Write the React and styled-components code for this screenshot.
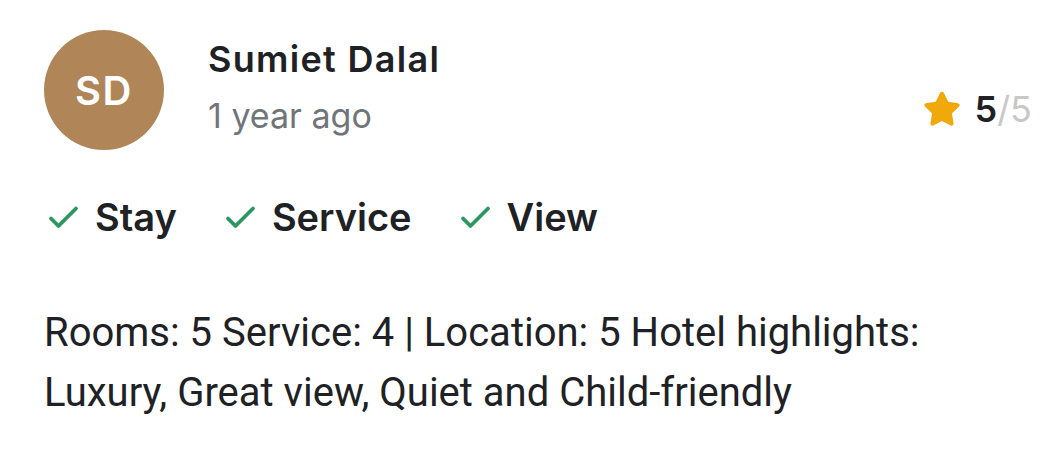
import React from "react";
import styled, { createGlobalStyle } from "styled-components";

const GlobalStyle = createGlobalStyle`
  *, *:before, *:after { box-sizing: border-box; }
  body {
    margin: 0;
    background: #ffffff;
    font-family: Inter, "Noto Sans", sans-serif;
    color: #202124;
  }
`;

const Card = styled.div`
  width: 1046px;
  padding: 30px 14px 0 44px;
`;

const Header = styled.div`
  display: flex;
  align-items: flex-start;
`;

const Avatar = styled.div`
  width: 120px;
  height: 120px;
  border-radius: 50%;
  background: ${(p) => p.color};
  color: #ffffff;
  display: flex;
  align-items: center;
  justify-content: center;
  font-size: 40px;
  font-weight: 600;
  letter-spacing: 1.5px;
  flex-shrink: 0;
`;

const Who = styled.div`
  margin-left: 44px;
  flex: 1;
  display: flex;
  flex-direction: column;
`;

const Name = styled.div`
  font-size: 36px;
  font-weight: 600;
  letter-spacing: 1.3px;
  line-height: 1;
  margin-top: 11px;
`;

const When = styled.div`
  font-size: 34px;
  color: #70757a;
  margin-top: 22px;
  line-height: 1;
`;

const Rating = styled.div`
  display: flex;
  align-items: center;
  margin-top: 57px;
  gap: 11px;
`;

const Score = styled.span`
  font-size: 36px;
  font-weight: 600;
  line-height: 1;
`;

const OutOf = styled.span`
  font-weight: 400;
  color: #c8c8c8;
`;

const Tags = styled.div`
  display: flex;
  align-items: center;
  gap: 48px;
  margin-top: 48px;
  padding-left: 4px;
`;

const Tag = styled.div`
  display: flex;
  align-items: center;
  gap: 15px;
  font-size: 38px;
  font-weight: 600;
  line-height: 1;
`;

const Body = styled.p`
  margin: 67px 0 0;
  font-family: Roboto, "Liberation Sans", sans-serif;
  font-size: 40px;
  line-height: 60px;
  color: #202124;
`;

const Star = () => (
  <svg width="44" height="44" viewBox="0 0 24 24">
    <path
      d="M12 2.6c.4 0 .8.2 1 .6l2.4 4.9 5.3.8c.9.1 1.3 1.2.6 1.8l-3.9 3.8.9 5.3c.2.9-.8 1.6-1.6 1.2L12 18.5 7.3 21c-.8.4-1.8-.3-1.6-1.2l.9-5.3-3.9-3.8c-.7-.6-.3-1.7.6-1.8l5.3-.8 2.4-4.9c.2-.4.6-.6 1-.6z"
      fill="#f1a80a"
    />
  </svg>
);

const Check = () => (
  <svg width="32" height="24" viewBox="0 0 32 24">
    <path
      d="M3 13.5l7.5 7.5L28 3.5"
      fill="none"
      stroke="#2a9660"
      strokeWidth="3.8"
      strokeLinecap="round"
      strokeLinejoin="round"
    />
  </svg>
);

const tags = ["Stay", "Service", "View"];

export default function App() {
  return (
    <>
      <GlobalStyle />
      <Card>
        <Header>
          <Avatar color="#b08659">SD</Avatar>
          <Who>
            <Name>Sumiet Dalal</Name>
            <When>1 year ago</When>
          </Who>
          <Rating>
            <Star />
            <Score>
              5<OutOf>/5</OutOf>
            </Score>
          </Rating>
        </Header>
        <Tags>
          {tags.map((t) => (
            <Tag key={t}>
              <Check />
              {t}
            </Tag>
          ))}
        </Tags>
        <Body>
          Rooms: 5 Service: 4 | Location: 5 Hotel highlights:
          <br />
          Luxury, Great view, Quiet and Child-friendly
        </Body>
      </Card>
    </>
  );
}
